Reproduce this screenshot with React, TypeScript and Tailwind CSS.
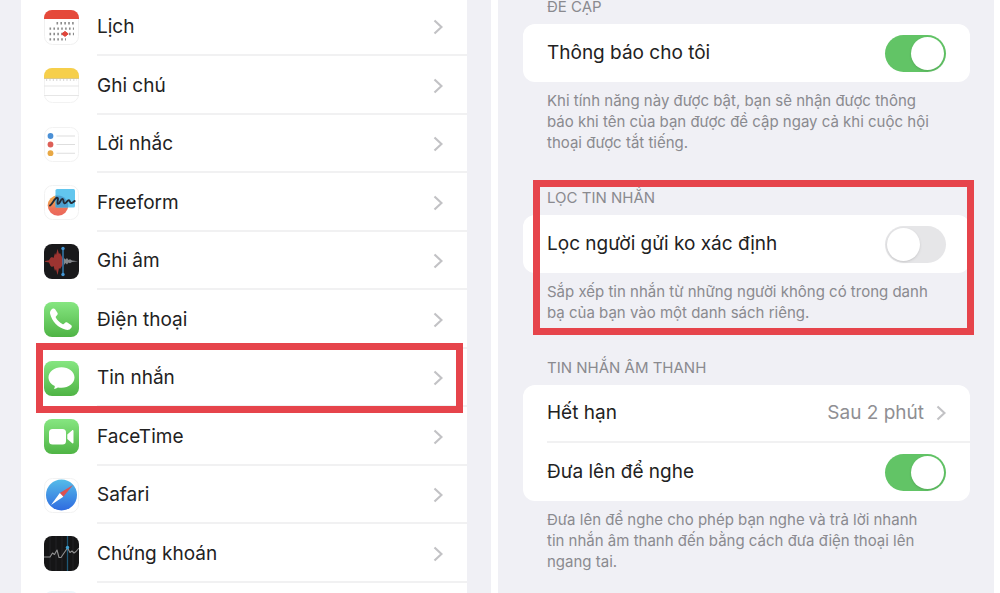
import React from 'react';
import { clsx } from 'clsx';

function CalendarIcon() {
  return (
    <svg viewBox="0 0 35 35" className="size-[35px]">
      <rect x="0.5" y="0.5" width="34" height="34" rx="8" fill="#fff" stroke="#f0f0f0" />
      <path d="M0 9V8a8 8 0 0 1 8-8h19a8 8 0 0 1 8 8v1z" fill="#e5493a" />
      <g stroke="#8b8b8b" strokeWidth="2.4" strokeDasharray="1.6 2.3">
        <path d="M12.5 13.2H30" />
        <path d="M5.5 18.6H30" />
        <path d="M5.5 24H30" />
        <path d="M5.5 29.4H22" />
      </g>
      <path d="M21 21.4l3.2 2.5-3.2 2.5-3.2-2.5z" fill="#e0463c" stroke="#e0463c" strokeWidth="1" />
    </svg>
  );
}

function NotesIcon() {
  return (
    <svg viewBox="0 0 35 35" className="size-[35px]">
      <rect x="0.5" y="0.5" width="34" height="34" rx="8" fill="#fff" stroke="#f2f2f2" />
      <path d="M0 10V8a8 8 0 0 1 8-8h19a8 8 0 0 1 8 8v2z" fill="#f6cf4b" />
      <path d="M0 10.5h35" stroke="#dcc98c" strokeWidth="1" />
      <path d="M2 12h31" stroke="#b9b9b9" strokeWidth="1" strokeDasharray="1.2 2.2" />
      <path d="M0 18h35M0 27.5h35" stroke="#e6e6e6" strokeWidth="1.2" />
    </svg>
  );
}

function RemindersIcon() {
  return (
    <svg viewBox="0 0 35 35" className="size-[35px]">
      <rect x="0.5" y="0.5" width="34" height="34" rx="8" fill="#fff" stroke="#f2f2f2" />
      <circle cx="6.5" cy="9" r="2.9" fill="#4b90d6" />
      <circle cx="6.5" cy="17.5" r="2.9" fill="#dd5f57" />
      <circle cx="6.5" cy="26.2" r="2.9" fill="#e8a844" />
      <path d="M12.5 9H31M12.5 17.5H31M12.5 26.2H31" stroke="#dedede" strokeWidth="1.1" />
    </svg>
  );
}

function FreeformIcon() {
  return (
    <svg viewBox="0 0 35 35" className="size-[35px]">
      <defs>
        <linearGradient id="freeform-dot" x1="0" y1="0" x2="0" y2="1">
          <stop offset="0" stopColor="#f3a84c" />
          <stop offset="0.35" stopColor="#f09a50" />
          <stop offset="0.65" stopColor="#ee7259" />
          <stop offset="1" stopColor="#e9665c" />
        </linearGradient>
      </defs>
      <rect x="0.5" y="0.5" width="34" height="34" rx="8" fill="#fff" stroke="#f2f2f2" />
      <circle cx="14" cy="20.5" r="10.3" fill="url(#freeform-dot)" />
      <rect x="11.5" y="4" width="19.5" height="18.5" rx="1.5" fill="#62c6ee" />
      <path d="M11.5 10.5v12h12.6A10.3 10.3 0 0 0 14 10.5z" fill="#4c9fd0" />
      <path
        d="M6 20.5c2.5-1.5 4.5-7.5 7-7.8 2.5 0-.8 5.5 1 6.2 1.8.4 2.6-5.3 4.5-5 1.8.5.2 4 2 4.5 2 .2 2.5-3.3 4.3-3.2 1.4.2 1 2.6 2.4 2.8 1.3 0 2.3-1.5 3.5-2"
        fill="none"
        stroke="#252b36"
        strokeWidth="1.9"
        strokeLinecap="round"
      />
    </svg>
  );
}

function VoiceMemosIcon() {
  return (
    <svg viewBox="0 0 35 35" className="size-[35px]">
      <rect width="35" height="35" rx="8" fill="#19191b" />
      <path
        d="M1 17l4-.7 1.5-2.5 1.5-.8 1.5 1 1.5-5 1 2L13.5 5l1.5 5 1-1 2 4 1 2v5l-1 2-2 3-1-1-1.5 7-1.5-6-1 2-1.5-5-1.5 1-1.5-1L5 18.5l-4-.7z"
        fill="#9c3431"
      />
      <path d="M20 14l1.5 1.5L23 14l1.5 2L26 15.2l2 1.4 6 .7-6 .6-2 1.3-1.5-.6-1.5 2-1.5-1.5L20 21z" fill="#85878c" />
      <path d="M19 4.5v26" stroke="#3b8bc5" strokeWidth="1.3" />
      <circle cx="19" cy="4.5" r="1.7" fill="#4597d4" />
      <circle cx="19" cy="30.5" r="1.7" fill="#4597d4" />
    </svg>
  );
}

function GreenTile({ id, children }: { id: string; children: React.ReactNode }) {
  return (
    <svg viewBox="0 0 35 35" className="size-[35px]">
      <defs>
        <linearGradient id={id} x1="0" y1="0" x2="0" y2="1">
          <stop offset="0" stopColor="#86e681" />
          <stop offset="1" stopColor="#4fb445" />
        </linearGradient>
      </defs>
      <rect width="35" height="35" rx="8" fill={`url(#${id})`} />
      {children}
    </svg>
  );
}

function PhoneIcon() {
  return (
    <GreenTile id="tile-phone">
      <path
        d="M8.4 6.8c1-.7 2-.4 2.7.5l2.3 3.4c.5.8.4 1.7-.2 2.3l-1.3 1.4c-.3.4-.3.8 0 1.3 1.6 2.7 3.7 4.8 6.5 6.4.5.3.9.2 1.3-.1l1.5-1.3c.6-.5 1.4-.6 2.1-.1l3.7 2.4c.8.6 1.1 1.5.5 2.4-1.3 2-3.2 2.9-5.5 2.4C14 26 8 19.5 6.1 11.8c-.4-2 .5-3.8 2.3-5z"
        fill="#fff"
      />
    </GreenTile>
  );
}

function MessagesIcon() {
  return (
    <GreenTile id="tile-messages">
      <path
        d="M17.5 6.2c7.2 0 13 4.6 13 10.3s-5.8 10.3-13 10.3c-1.3 0-2.5-.1-3.6-.4-1.2.9-2.5 1.5-4 1.7.6-.8.9-1.8.9-3-3.8-1.8-6.3-5-6.3-8.6 0-5.7 5.8-10.3 13-10.3z"
        fill="#fff"
      />
    </GreenTile>
  );
}

function FaceTimeIcon() {
  return (
    <GreenTile id="tile-facetime">
      <rect x="5" y="10" width="17" height="15.5" rx="3.5" fill="#fff" />
      <path d="M23.3 15.5l4.6-4.1c.7-.6 1.6-.2 1.6.7v11.3c0 .9-.9 1.3-1.6.7l-4.6-4.1z" fill="#fff" />
    </GreenTile>
  );
}

function SafariIcon() {
  return (
    <svg viewBox="0 0 35 35" className="size-[35px]">
      <defs>
        <linearGradient id="safari-dial" x1="0" y1="0" x2="0" y2="1">
          <stop offset="0" stopColor="#55bce9" />
          <stop offset="1" stopColor="#2f6be0" />
        </linearGradient>
      </defs>
      <rect x="0.5" y="0.5" width="34" height="34" rx="8" fill="#fff" stroke="#f2f2f2" />
      <circle cx="17.5" cy="17" r="15.5" fill="url(#safari-dial)" />
      <path d="M29 7L15.8 15.1l3.5 3.7z" fill="#dd5151" />
      <path d="M7 27l8.8-11.9 3.5 3.7z" fill="#fff" />
    </svg>
  );
}

function StocksIcon() {
  return (
    <svg viewBox="0 0 35 35" className="size-[35px]">
      <rect width="35" height="35" rx="8" fill="#151516" />
      <path d="M6 1v33M12 0v35M18 0v35M29 1v33" stroke="#222224" strokeWidth="1" />
      <path d="M23.5 0v35" stroke="#1f5876" strokeWidth="1.3" />
      <path
        d="M0 21h6l2.5-4 2 1.5L13 14l2 7.5h2l3-4.5 3.5-5 2.5 4.5 2-1.5 2 2 2-1.5L35 12"
        fill="none"
        stroke="#929292"
        strokeWidth="1.1"
        strokeLinejoin="round"
      />
      <circle cx="23.5" cy="11.5" r="1.7" fill="#3f9fd0" />
    </svg>
  );
}

function Chevron() {
  return (
    <svg viewBox="0 0 10 16" className="h-4 w-2.5 shrink-0" aria-hidden="true">
      <path d="M1.5 1.5L8.5 8l-7 6.5" fill="none" stroke="#c2c2c5" strokeWidth="2.2" />
    </svg>
  );
}

const apps = [
  { name: 'Lịch', icon: <CalendarIcon /> },
  { name: 'Ghi chú', icon: <NotesIcon /> },
  { name: 'Lời nhắc', icon: <RemindersIcon /> },
  { name: 'Freeform', icon: <FreeformIcon /> },
  { name: 'Ghi âm', icon: <VoiceMemosIcon /> },
  { name: 'Điện thoại', icon: <PhoneIcon /> },
  { name: 'Tin nhắn', icon: <MessagesIcon />, highlighted: true },
  { name: 'FaceTime', icon: <FaceTimeIcon /> },
  { name: 'Safari', icon: <SafariIcon /> },
  { name: 'Chứng khoán', icon: <StocksIcon /> },
];

function Highlight({ className }: { className: string }) {
  return <div className={clsx('pointer-events-none absolute z-10 border-[7px] border-[#e6444b]', className)} />;
}

function AppList() {
  return (
    <nav className="overflow-hidden bg-[#f0f0f5] pr-6 pl-[21px]">
      <ul className="-mt-0.5 bg-white">
        {apps.map((app) => (
          <li key={app.name} className="relative h-[58px] even:h-[59px]">
            <a href="#" className="flex h-full items-center gap-[18px] pl-[23px]">
              {app.icon}
              <span className="flex h-full flex-1 items-center justify-between border-b-2 border-[#f1f1f2] pt-0.5 pr-6 text-[19px] leading-7">
                {app.name}
                <Chevron />
              </span>
            </a>
            {app.highlighted && <Highlight className="-top-1.5 right-1 -bottom-1.5 left-[15px]" />}
          </li>
        ))}
        <li className="h-[58px] pt-2 pl-[23px]">
          <div className="size-[35px] rounded-lg bg-[#eef6fb]" />
        </li>
      </ul>
    </nav>
  );
}

function Toggle({ label, defaultChecked }: { label: string; defaultChecked?: boolean }) {
  return (
    <label className="flex h-[58px] items-center justify-between px-6 text-[19px] leading-7">
      {label}
      <input
        type="checkbox"
        role="switch"
        defaultChecked={defaultChecked}
        className="flex h-[37px] w-[61px] shrink-0 appearance-none items-center rounded-full bg-[#e6e6e8] p-0.5 before:size-[33px] before:rounded-full before:bg-white before:shadow-sm checked:justify-end checked:bg-[#62c466]"
      />
    </label>
  );
}

interface SectionProps {
  title: string;
  note: string;
  highlighted?: boolean;
  children: React.ReactNode;
}

function Section({ title, note, highlighted, children }: SectionProps) {
  return (
    <section className="relative">
      <h2 className="px-6 pb-[7px] text-[15px] leading-5 text-[#8a8a8f] uppercase">{title}</h2>
      <div className="rounded-xl bg-white">{children}</div>
      <p className="pt-2 pr-9 pl-6 text-[15px] leading-[21px] text-[#8a8a8f]">{note}</p>
      {highlighted && <Highlight className="-top-2 -right-1 -bottom-3 left-2.5" />}
    </section>
  );
}

export default function App() {
  return (
    <div className="grid h-screen grid-cols-[491fr_496fr] gap-[7px] overflow-hidden bg-white pr-1.5 font-['Inter',sans-serif] text-[#222222]">
      <AppList />
      <main className="overflow-hidden bg-[#f0f0f5] pr-6 pl-[25px]">
        <div className="-mt-[3px] flex flex-col gap-[35px]">
          <Section
            title="Đề cập"
            note="Khi tính năng này được bật, bạn sẽ nhận được thông báo khi tên của bạn được đề cập ngay cả khi cuộc hội thoại được tắt tiếng."
          >
            <Toggle label="Thông báo cho tôi" defaultChecked />
          </Section>
          <Section
            title="Lọc tin nhắn"
            note="Sắp xếp tin nhắn từ những người không có trong danh bạ của bạn vào một danh sách riêng."
            highlighted
          >
            <Toggle label="Lọc người gửi ko xác định" />
          </Section>
          <Section
            title="Tin nhắn âm thanh"
            note="Đưa lên để nghe cho phép bạn nghe và trả lời nhanh tin nhắn âm thanh đến bằng cách đưa điện thoại lên ngang tai."
          >
            <button type="button" className="flex h-[58px] w-full items-center pl-6 text-[19px] leading-7">
              <span className="flex h-full flex-1 items-center justify-between border-b-2 border-[#f1f1f2] pr-6">
                Hết hạn
                <span className="flex items-center gap-3 text-[#8f8f93]">
                  Sau 2 phút
                  <Chevron />
                </span>
              </span>
            </button>
            <Toggle label="Đưa lên để nghe" defaultChecked />
          </Section>
        </div>
      </main>
    </div>
  );
}
